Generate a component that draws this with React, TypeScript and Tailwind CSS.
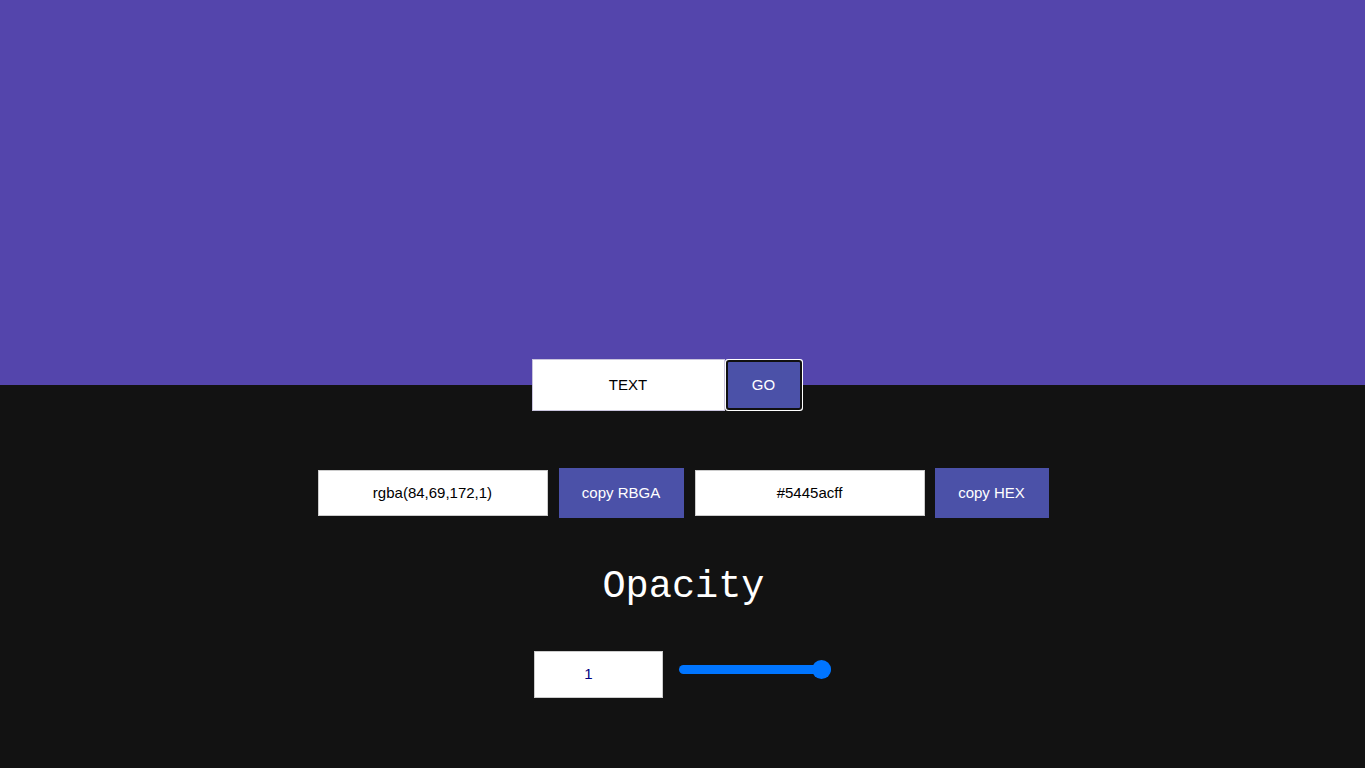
import React from "react";

export default function App() {
  const font = { fontFamily: '"Liberation Sans", Arial, sans-serif' };
  return (
    <div className="w-full min-h-[768px] bg-[#121212] flex flex-col" style={font}>
      <div className="h-[385px] w-full bg-[#5445ac] shrink-0" />
      <div className="flex justify-center -mt-[26px] mr-[31px]">
        <div className="flex">
          <div className="w-[193px] h-[52px] bg-white border border-[#c9c4dd] flex items-center justify-center text-[15px] text-black">
            TEXT
          </div>
          <div className="w-[78px] h-[52px] rounded-[3px] bg-white p-px">
            <div className="w-full h-full rounded-[3px] border-2 border-[#101010] bg-[#4b51a8] flex items-center justify-center text-[15px] text-white">
              GO
            </div>
          </div>
        </div>
      </div>
      <div className="flex justify-center items-center mt-[57px] ml-[1px]">
        <div className="w-[230px] h-[46px] bg-white border border-[#cccccc] flex items-center justify-center text-[15px] text-black">
          rgba(84,69,172,1)
        </div>
        <div className="ml-[11px] w-[125px] h-[50px] bg-[#4b51a8] flex items-center justify-center text-[15px] text-white">
          copy RBGA
        </div>
        <div className="ml-[11px] w-[230px] h-[46px] bg-white border border-[#cccccc] flex items-center justify-center text-[15px] text-black">
          #5445acff
        </div>
        <div className="ml-[10px] w-[114px] h-[50px] bg-[#4b51a8] flex items-center justify-center text-[15px] text-white">
          copy HEX
        </div>
      </div>
      <div
        className="mt-[47px] text-center text-white text-[38.6px] leading-[44px] ml-[2px]"
        style={{ fontFamily: '"Liberation Mono", "Courier New", monospace' }}
      >
        Opacity
      </div>
      <div className="flex justify-center items-start mt-[42px] ml-[-1px]">
        <div className="w-[129px] h-[47px] bg-white border border-[#cccccc] flex items-center justify-center pr-[19px] text-[15px] text-[#000080]">
          1
        </div>
        <div className="ml-[16px] mt-[9px] relative w-[152px] h-[19px] flex items-center">
          <div className="w-full h-[9px] rounded-full bg-[#0075ff]" />
          <div className="absolute right-0 top-0 w-[19px] h-[19px] rounded-full bg-[#0075ff]" />
        </div>
      </div>
    </div>
  );
}
